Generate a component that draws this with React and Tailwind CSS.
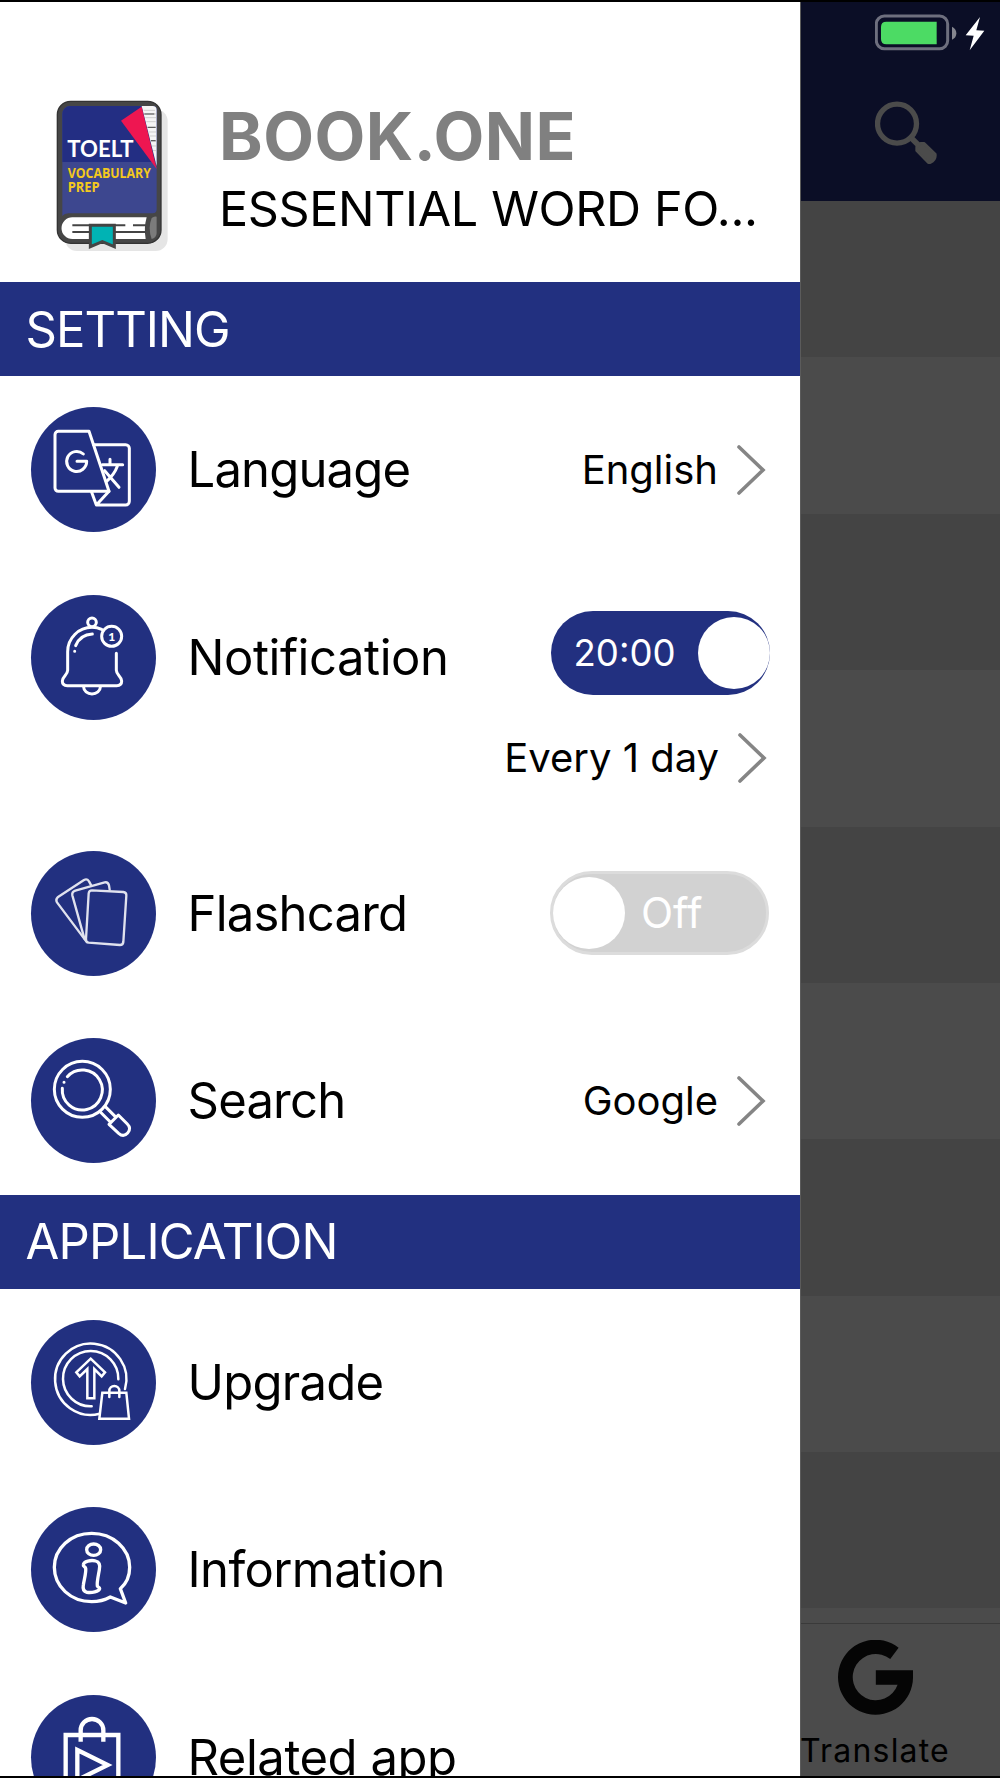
const SettingIcon = ({ children, width = 9, color = '#fff' }) => (
  <div className="w-[125px] h-[125px] ml-[31px] rounded-full bg-[#223080] flex-shrink-0">
    <svg viewBox="0 0 375 375" className="w-full h-full" fill="none" stroke={color} strokeWidth={width} strokeLinecap="round" strokeLinejoin="round">
      {children}
    </svg>
  </div>
);

const LanguageIcon = () => (
  <SettingIcon>
    <path d="M174 73H82a10 10 0 0 0-10 10V243a10 10 0 0 0 10 10H234Z" />
    <path d="M188 113H284a11 11 0 0 1 11 11V283a11 11 0 0 1-11 11H196L182 256M196 294L234 253" />
    <path d="M157 141A30 30 0 1 0 167 163H138" />
    <path d="M237 157V172M214 173H275M259 178Q250 203 226 224M221 191L264 241" />
  </SettingIcon>
);

const BellIcon = () => (
  <SettingIcon>
    <circle cx="183" cy="82" r="13" />
    <path d="M212 103C203 99 193 97 183 97A73 73 0 0 0 110 170V226C110 240 94 244 94 258C94 267 100 272 109 272H257C266 272 272 267 272 258C272 244 256 240 256 226V175" />
    <path d="M158 276a25 21 0 0 0 50 0M134 152Q147 119 184 117M131 169h.1" />
    <circle cx="242" cy="124" r="30" />
    <text x="242" y="137" textAnchor="middle" fill="#fff" stroke="none" className="font-[Lato] font-black text-[36px]">1</text>
  </SettingIcon>
);

const CardsIcon = () => (
  <SettingIcon width={7} color="#e0e2ee">
    <path d="M181 104L174 91q-6-9-15-4L80 139q-7 7-2 15L164 269" />
    <path d="M236 116L234 103q-3-11-13-9L133 119q-11 4-9 14L160 262" />
    <path d="M183 118L277 123q10 1 9 11L277 273q-1 9-10 9L173 275q-9-1-8-11L173 127q1-9 10-9Z" />
  </SettingIcon>
);

const SearchIcon = () => (
  <SettingIcon>
    <circle cx="154" cy="154" r="84" />
    <path d="M109 116A60 60 0 1 1 94 151M99 133h.1" />
    <path d="M208 222L238 252M223 206L253 236" />
    <path d="M234 259L262 231L289 258c9 9 8 19 1 27c-8 9-18 9-27 1Z" />
  </SettingIcon>
);

const UpgradeIcon = () => (
  <SettingIcon width={7.5}>
    <path d="M206 281A107 107 0 1 1 282 207M182 259A83 83 0 1 1 262 178" />
    <path d="M179 116L222 157L212 169L190 147V235H169V147L146 169L136 157Z" strokeLinejoin="miter" />
    <path d="M214 218H286L294 296H205ZM235 231V213a15 15 0 0 1 30 0V231" strokeLinejoin="miter" />
  </SettingIcon>
);

const InfoIcon = () => (
  <SettingIcon width={10}>
    <path d="M268 245L284 288L238 270C220 280 202 284 182 284C119 284 70 238 70 181S119 79 182 79S296 124 296 181C296 207 287 229 268 245Z" />
    <ellipse cx="188" cy="128" rx="21" ry="17" />
    <path d="M157 173C158 163 180 158 194 162C206 165 208 174 205 188C202 206 197 226 199 237C201 241 206 240 206 245C204 254 182 258 168 256C157 253 155 244 157 234C159 218 166 198 164 184C163 178 156 179 157 173Z" />
  </SettingIcon>
);

const RelatedIcon = () => (
  <SettingIcon width={13}>
    <path d="M104 300V120H262V300Z" strokeLinejoin="miter" strokeLinecap="butt" />
    <path d="M149 140V106a34 34 0 0 1 68 0V140" strokeLinecap="butt" />
    <path d="M139 165L230 210L139 255Z" strokeLinejoin="miter" />
  </SettingIcon>
);

const BookLogo = () => (
  <svg viewBox="0 0 345 460" className="w-[115px] h-[153.3px] ml-[55px] flex-shrink-0">
    <rect x="30" y="28" width="308" height="425" rx="36" fill="#e5e5e5" />
    <rect x="7" y="4" width="311" height="426" rx="40" fill="#464646" stroke="#333" strokeWidth="4" />
    <path d="M22 345V42a24 24 0 0 1 24-24H293a12 12 0 0 1 12 12V328a12 12 0 0 1-12 12H40Q28 340 22 348Z" fill="#3d478f" />
    <path d="M22 186V42a24 24 0 0 1 24-24H293a12 12 0 0 1 12 12V186Z" fill="#232e83" />
    <path d="M260 18H293a12 12 0 0 1 12 12V198Z" fill="#f5f5f5" />
    <path d="M266 31h34M268 42h36M271 53h33M274 65h28M276 82h28M280 96h24M283 108h20M287 124h17M290 138h14M294 152h10" stroke="#bbb" strokeWidth="2" />
    <path d="M268 42h30M278 82h24M288 122h14" stroke="#444" strokeWidth="3" />
    <path d="M260 20L198 62L305 207Z" fill="#ee1651" />
    <path d="M275 352H52a32 32 0 0 0 0 65H272Q266 384 275 352Z" fill="#fff" />
    <path d="M305 350V400Q304 414 290 417Q278 384 290 354Q297 348 305 350Z" fill="#7b7b7b" />
    <path d="M52 376H211M234 376H273M52 396H273" stroke="#444" strokeWidth="6" />
    <path d="M106 376H178V440L142 425L106 440Z" fill="#00b3b4" stroke="#444" strokeWidth="9" />
    <text x="37" y="170" fill="#fff" textLength="199" lengthAdjust="spacingAndGlyphs" className="font-[Lato] font-bold text-[67px]">TOELT</text>
    <text x="38" y="234" fill="#f4c91c" textLength="250" lengthAdjust="spacingAndGlyphs" className="font-['Open_Sans'] font-bold text-[45px]">VOCABULARY</text>
    <text x="38" y="277" fill="#f4c91c" textLength="96" lengthAdjust="spacingAndGlyphs" className="font-['Open_Sans'] font-bold text-[45px]">PREP</text>
  </svg>
);

const SectionTitle = ({ children, className }) => (
  <div className={`h-[94px] w-full bg-[#223080] flex items-center flex-shrink-0 pl-[25.5px] text-white text-[49px] leading-none ${className}`}>
    {children}
  </div>
);

const Chevron = () => (
  <svg viewBox="0 0 30 52" className="w-[30px] h-[52px] ml-[18px]" fill="none" stroke="#858585" strokeWidth="3.6" strokeLinecap="round">
    <path d="M3 3L27 26L3 49" />
  </svg>
);

const Value = ({ children }) => (
  <div className="flex items-center">
    <span className="text-[40px] leading-none">{children}</span>
    <Chevron />
  </div>
);

const Row = ({ icon, label, className, children }) => (
  <div className="h-[187.5px] flex items-center flex-shrink-0 pr-[34px]">
    {icon}
    <span className={`ml-[31.5px] flex-1 text-[49px] leading-none whitespace-nowrap ${className}`}>{label}</span>
    {children}
  </div>
);

const Background = () => (
  <div className="w-[200px] flex flex-col flex-shrink-0 border-l border-[#5b5b5b] bg-[#4b4b4b]">
    <div className="h-[199px] bg-[#0b0e26] flex-shrink-0 flex flex-col pl-[74px]">
      <svg viewBox="0 0 330 110" className="w-[110px] h-[36.7px] mt-[12px]">
        <rect x="4" y="6" width="214" height="98" rx="24" fill="none" stroke="#6e6f7e" strokeWidth="9" />
        <path d="M34 23H185V91H34Q18 91 18 75V39Q18 23 34 23Z" fill="#4cdb64" />
        <path d="M231 38Q244 44 244 57.500T231 77Z" fill="#85868f" />
        <path d="M315 9L272 64L296 65L284 109L328 50L304 49Z" fill="#fff" />
      </svg>
      <svg viewBox="0 0 186 190" className="w-[62px] h-[63.3px] mt-[50px]" fill="#4b4b4b" stroke="#4b4b4b" strokeLinejoin="round">
        <circle cx="66" cy="68" r="58.500" fill="none" strokeWidth="16" />
        <path d="M106 108L130 132" strokeWidth="17" />
        <path d="M125 149V138L137 127H147L181 160Q183 177 166 185H160Z" strokeWidth="8" />
      </svg>
    </div>
    {[0, 1, 2, 3].map((i) => (
      <div key={i} className="h-[312.8px] flex-shrink-0">
        <div className="h-1/2 bg-[#444444]"></div>
      </div>
    ))}
    <div className="h-[156px] bg-[#444444] flex-shrink-0"></div>
    <div className="h-[15px] flex-shrink-0"></div>
    <div className="flex-1 border-t border-[#3a3a3a] flex flex-col items-center pr-[51px] pt-[16px]">
      <svg viewBox="0 0 224 224" className="w-[75px] h-[75px] flex-shrink-0">
        <path d="M181 23A112 112 0 1 0 224 112V90H113V134H178A69 69 0 1 1 156 57Z" fill="#050505" />
      </svg>
      <span className="text-[32px] leading-none tracking-[1.18px] mt-[20px] whitespace-nowrap">Translate</span>
    </div>
  </div>
);

export default function App() {
  return (
    <div className="w-[1000px] h-[1778px] overflow-hidden flex border-t-2 border-b-2 border-black bg-white text-black font-[Inter,sans-serif]">
      <div className="w-[800px] flex flex-col flex-shrink-0 overflow-hidden">
        <div className="h-[280px] flex-shrink-0 flex items-start pt-[98px]">
          <BookLogo />
          <div className="ml-[49px] -mt-[4px] flex flex-col whitespace-nowrap">
            <h1 className="text-[66px] leading-[80px] font-bold text-[#808080] tracking-[0.48px]">BOOK.ONE</h1>
            <p className="text-[48.5px] leading-[60px] mt-[3px] tracking-[-0.38px]">ESSENTIAL WORD FO...</p>
          </div>
        </div>

        <SectionTitle className="tracking-[-0.95px]">SETTING</SectionTitle>
        <Row icon={<LanguageIcon />} label="Language" className="tracking-[-0.82px]">
          <Value>English</Value>
        </Row>
        <div className="h-[256px] flex-shrink-0">
          <Row icon={<BellIcon />} label="Notification" className="tracking-[-0.45px]">
            <div className="w-[219px] h-[84px] -mt-[8px] -mr-[3.5px] rounded-full bg-[#223080] flex items-center justify-between pl-[23px]">
              <span className="text-white text-[36.6px] leading-none">20:00</span>
              <div className="w-[72px] h-[72px] rounded-full bg-white"></div>
            </div>
          </Row>
          <div className="flex justify-end pr-[33px] -mt-[19px]">
            <Value>Every 1 day</Value>
          </div>
        </div>
        <Row icon={<CardsIcon />} label="Flashcard" className="tracking-[-0.78px]">
          <div className="w-[219px] h-[84px] -mr-[3px] rounded-full bg-[#d2d2d2] border-[3px] border-[#dcdcdc] flex items-center">
            <div className="w-[72px] h-[72px] rounded-full bg-white"></div>
            <span className="text-white text-[42px] leading-none ml-[16px]">Off</span>
          </div>
        </Row>
        <Row icon={<SearchIcon />} label="Search" className="tracking-[-0.8px]">
          <Value>Google</Value>
        </Row>

        <SectionTitle className="tracking-[-0.8px]">APPLICATION</SectionTitle>
        <Row icon={<UpgradeIcon />} label="Upgrade" className="tracking-[-0.75px]" />
        <Row icon={<InfoIcon />} label="Information" className="tracking-[-0.61px]" />
        <Row icon={<RelatedIcon />} label="Related app" className="tracking-[-0.47px]" />
      </div>
      <Background />
    </div>
  );
}
